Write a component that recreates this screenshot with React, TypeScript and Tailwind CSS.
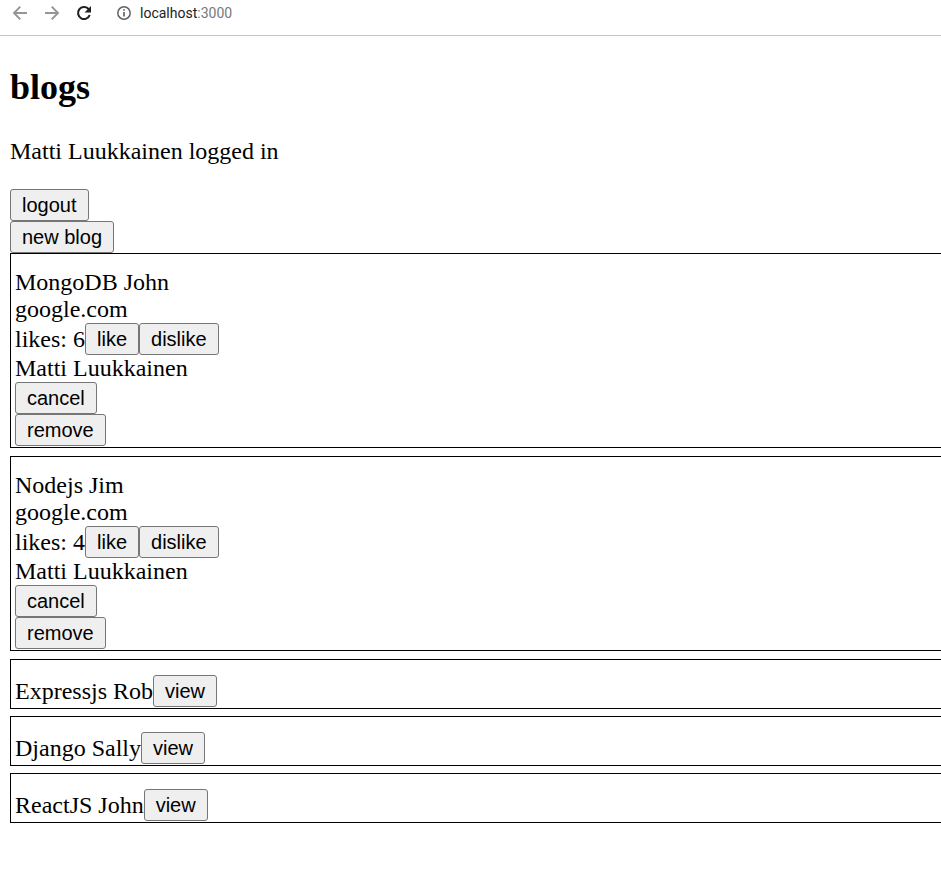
import type { ReactNode } from 'react';

const blogs = [
  { title: 'MongoDB', author: 'John', open: true, likes: 6 },
  { title: 'Nodejs', author: 'Jim', open: true, likes: 4 },
  { title: 'Expressjs', author: 'Rob', open: false, likes: 0 },
  { title: 'Django', author: 'Sally', open: false, likes: 0 },
  { title: 'ReactJS', author: 'John', open: false, likes: 0 },
];

function Button({ children }: { children: ReactNode }) {
  return (
    <button
      type="button"
      className="h-8 rounded-[3px] border border-[#767676] bg-[#efefef] px-[11px] font-['Liberation_Sans',Arial,sans-serif] text-[20px] leading-[28px] text-black"
    >
      {children}
    </button>
  );
}

function BrowserBar() {
  return (
    <header className="flex h-9 items-start border-b border-[#c4c4c4] pl-3 pt-[5px]">
      <nav className="flex gap-4">
        <button type="button" aria-label="Back">
          <svg className="size-4" viewBox="0 0 16 16" fill="none" stroke="#939598" strokeWidth="1.9">
            <path d="M15 8H2.500M8.300 1.700 2 8l6.300 6.300" />
          </svg>
        </button>
        <button type="button" aria-label="Forward">
          <svg className="size-4" viewBox="0 0 16 16" fill="none" stroke="#939598" strokeWidth="1.9">
            <path d="M1 8h12.500M7.700 1.700 14 8l-6.300 6.300" />
          </svg>
        </button>
        <button type="button" aria-label="Reload">
          <svg className="size-4" viewBox="0 0 16 16" fill="none">
            <path d="M13.700 10A6 6 0 1 1 12.300 3.800L14 5.500" stroke="#202124" strokeWidth="2.1" />
            <path d="M15 1v6.500H8.500z" fill="#202124" />
          </svg>
        </button>
      </nav>
      <div className="flex items-center gap-2 pl-6 font-[Roboto,sans-serif] text-[14px] leading-4">
        <svg className="size-4" viewBox="0 0 16 16" fill="none">
          <circle cx="8" cy="8" r="6.200" stroke="#5f6368" strokeWidth="1.500" />
          <path d="M8 7v4.500M8 4.300v1.500" stroke="#5f6368" strokeWidth="1.700" />
        </svg>
        <span className="text-[#75787c]">
          <span className="text-[#202124]">localhost</span>:3000
        </span>
      </div>
    </header>
  );
}

function Blog({ blog }: { blog: (typeof blogs)[number] }) {
  return (
    <article
      className={`border border-r-0 border-black pb-px pl-1 pt-[15px] ${blog.open ? 'mb-2' : 'mb-[7px]'}`}
    >
      {blog.open ? (
        <>
          <div>{blog.title} {blog.author}</div>
          <div>google.com</div>
          <div className="flex items-center">
            likes: {blog.likes}
            <Button>like</Button>
            <Button>dislike</Button>
          </div>
          <div>Matti Luukkainen</div>
          <div className="flex flex-col items-start">
            <Button>cancel</Button>
            <Button>remove</Button>
          </div>
        </>
      ) : (
        <div className="flex items-center">
          {blog.title} {blog.author}
          <Button>view</Button>
        </div>
      )}
    </article>
  );
}

export default function App() {
  return (
    <div className="min-h-screen overflow-x-hidden bg-white text-black">
      <BrowserBar />
      <main className="pl-[10px] pt-[30px] font-['Liberation_Serif','Times_New_Roman',serif] text-[24px] leading-[27px]">
        <h1 className="text-[36px] font-bold leading-[42px]">blogs</h1>
        <p className="my-6 mt-[30px]">Matti Luukkainen logged in</p>
        <div className="flex flex-col items-start">
          <Button>logout</Button>
          <Button>new blog</Button>
        </div>
        <section>
          {blogs.map((blog) => (
            <Blog key={blog.title} blog={blog} />
          ))}
        </section>
      </main>
    </div>
  );
}
